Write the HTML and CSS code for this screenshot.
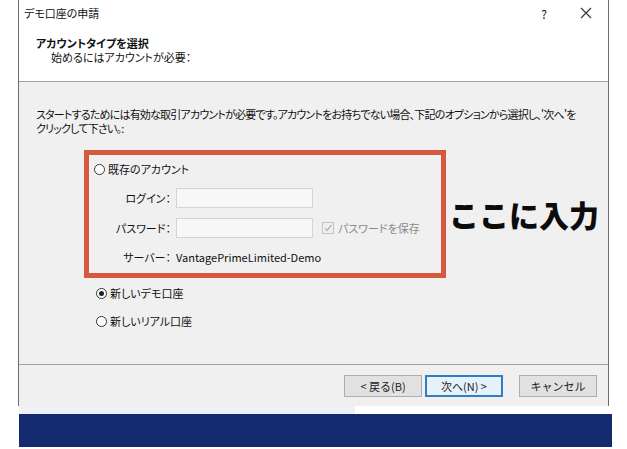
FILE: index.html
```html
<!DOCTYPE html>
<html lang="ja">
<head>
  <meta charset="UTF-8">
  <title>デモ口座の申請</title>
  <link rel="stylesheet" href="styles.css">
</head>
<body>
  <div class="window">
    <div class="titlebar">
      <span class="title">デモ口座の申請</span>
      <span class="help">?</span>
      <svg class="close" width="12" height="12" viewBox="0 0 12 12"><path d="M1 1L11 11M11 1L1 11" stroke="#333" stroke-width="1.1" fill="none"/></svg>
    </div>
    <div class="header">
      <div class="header-title">アカウントタイプを選択</div>
      <div class="header-sub">始めるにはアカウントが必要：</div>
    </div>
    <div class="content">
      <p class="intro">スタートするためには有効な取引アカウントが必要です。アカウントをお持ちでない場合、下記のオプションから選択し、'次へ'を<br>クリックして下さい。:</p>

      <div class="existing">
        <label class="radio"><span class="circle"></span>既存のアカウント</label>
        <div class="fields">
          <span class="lbl">ログイン：</span>
          <span class="input"></span>
          <span></span>
          <span class="lbl">パスワード：</span>
          <span class="input"></span>
          <span class="save"><span class="check">
            <svg width="10" height="10" viewBox="0 0 10 10"><path d="M2 5L4 7.5L8.5 2" stroke="#b0b0b0" stroke-width="1.2" fill="none"/></svg>
          </span>パスワードを保存</span>
          <span class="lbl">サーバー：</span>
          <span class="server">VantagePrimeLimited-Demo</span>
        </div>
      </div>

      <label class="radio option"><span class="circle on"></span>新しいデモ口座</label>
      <label class="radio option"><span class="circle"></span>新しいリアル口座</label>
    </div>
    <div class="footer">
      <button class="btn">&lt; 戻る(B)</button>
      <button class="btn focus">次へ(N) &gt;</button>
      <button class="btn cancel">キャンセル</button>
    </div>
  </div>
  <div class="gap"></div>
  <div class="band"></div>

  <div class="note">ここに入力</div>
</body>
</html>
```

FILE: styles.css
```css
body {
  margin: 0;
  background: #fff;
  font-family: "Noto Sans CJK JP", "Noto Sans", sans-serif;
  font-size: 11px;
  color: #111;
  font-feature-settings: "palt";
  position: relative;
  width: 627px;
  height: 449px;
  overflow: hidden;
}
.window {
  margin-left: 18px;
  width: 589px;
  border-left: 1px solid #6a6a6a;
  border-right: 1px solid #6a6a6a;
  background: #fff;
}
.titlebar {
  height: 26px;
  display: flex;
  align-items: center;
  padding-left: 5px;
}
.title {
  flex: 1;
  font-size: 11px;
}
.help {
  font-size: 12px;
  margin-right: 33px;
}
.close {
  margin-right: 16px;
}
.header {
  height: 55px;
  padding-left: 17px;
  border-bottom: 1px solid #a0a0a0;
}
.header-title {
  font-weight: bold;
  font-size: 11px;
  line-height: 14px;
  padding-top: 10px;
}
.header-sub {
  padding-left: 15px;
  line-height: 14px;
}
.content {
  background: #f0f0f0;
  height: 283px;
  padding: 25px 0 0 17px;
  box-sizing: border-box;
  border-bottom: 1px solid #a0a0a0;
}
.intro {
  margin: 0;
  line-height: 14px;
  letter-spacing: -0.8px;
  white-space: nowrap;
}
.existing {
  margin: 15px 0 0 48px;
  width: 352px;
  height: 118px;
  border: 5px solid #d6593d;
}
.radio {
  display: flex;
  align-items: center;
  height: 18px;
}
.existing .radio {
  margin: 5px 0 0 5px;
}
.circle {
  width: 11px;
  height: 11px;
  border: 1px solid #333;
  border-radius: 50%;
  margin-right: 3px;
  box-sizing: border-box;
  background: #fff;
  position: relative;
}
.circle.on::after {
  content: "";
  position: absolute;
  left: 2px;
  top: 2px;
  width: 5px;
  height: 5px;
  border-radius: 50%;
  background: #222;
}
.fields {
  display: grid;
  grid-template-columns: 82px 137px auto;
  column-gap: 5px;
  row-gap: 10px;
  margin-top: 10px;
  align-items: center;
}
.lbl {
  text-align: right;
}
.input {
  height: 20px;
  background: #f7f7f7;
  border: 1px solid #d4d4d4;
  box-sizing: border-box;
}
.save {
  display: flex;
  align-items: center;
  color: #8a8a8a;
  margin-left: 4px;
}
.check {
  width: 10px;
  height: 10px;
  border: 1px solid #c4c4c4;
  margin-right: 4px;
  display: flex;
}
.server {
  grid-column: 2 / 4;
  line-height: 18px;
  white-space: nowrap;
}
.option {
  margin-left: 60px;
}
.existing + .option {
  margin-top: 6px;
}
.option + .option {
  margin-top: 10px;
}
.footer {
  height: 41px;
  background: #f0f0f0;
  display: flex;
  align-items: center;
  padding-left: 325px;
  gap: 3px;
}
.btn {
  width: 78px;
  height: 22px;
  font-family: inherit;
  font-size: 11px;
  background: #e1e1e1;
  border: 1px solid #adadad;
  color: #222;
  padding: 0;
}
.btn.focus {
  border: 2px solid #2f7fc0;
  background: #e5f1fb;
}
.btn.cancel {
  margin-left: 13px;
}
.gap {
  height: 8px;
  margin-left: 19px;
  width: 336px;
  background: #eef1f5;
}
.band {
  margin-left: 19px;
  width: 593px;
  height: 33px;
  background: #132b6e;
}
.note {
  position: absolute;
  left: 449px;
  top: 196px;
  font-size: 30px;
  font-weight: 900;
  color: #0c0c0c;
  line-height: 36px;
  font-feature-settings: normal;
}
```
